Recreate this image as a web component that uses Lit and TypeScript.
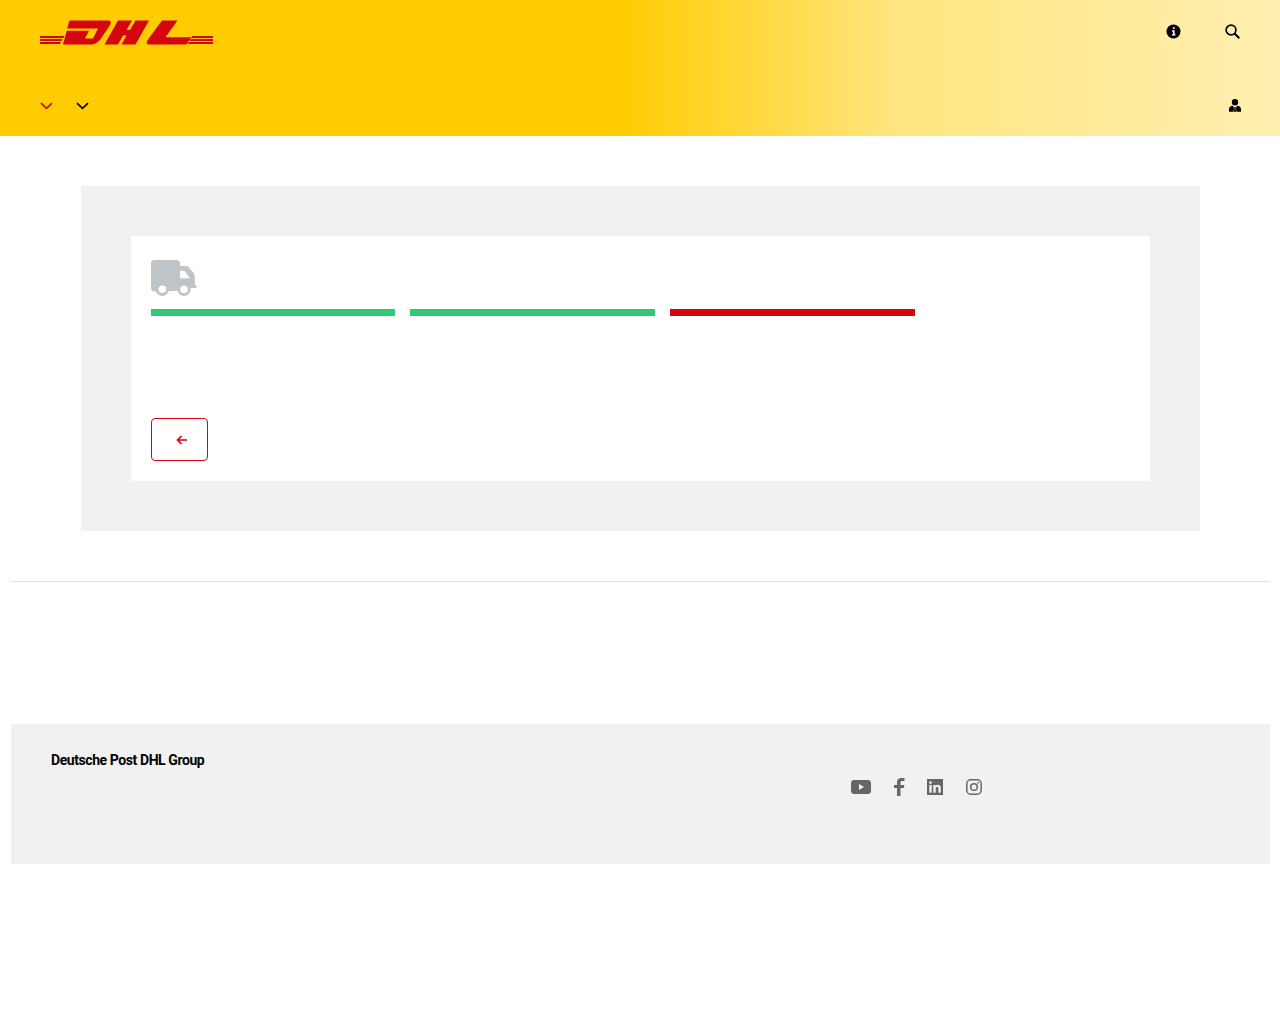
import { LitElement, html, css } from "lit";
import { customElement } from "lit/decorators.js";

const chevron = (cls: string) => html`<svg class="chev ${cls}" width="13" height="8" viewBox="0 0 13 8"><path d="M1 1.200 6.500 6.300 12 1.200" fill="none" stroke="currentColor" stroke-width="1.700"/></svg>`;

@customElement("app-root")
export class AppRoot extends LitElement {
  static styles = css`
    :host { display: block; font-family: "Roboto", "Liberation Sans", sans-serif; background: #fff; min-height: 1024px; }
    header { height: 136px; box-sizing: border-box; padding: 20px 38px 0 40px; display: flex; flex-direction: column;
      background: linear-gradient(90deg, #fc0 0, #fc0 48%, #ffe57f 70%, #fff0b2 100%); }
    .top { display: flex; justify-content: space-between; height: 25px; }
    .logo { display: block; }
    .tools { display: flex; gap: 44px; padding-top: 4px; margin-right: 2px; }
    .tools svg { display: block; }
    .nav { display: flex; justify-content: space-between; align-items: center; margin-top: 54px; }
    .chevs { display: flex; gap: 23px; padding-top: 1px; }
    .chev { display: block; }
    .red { color: #d40511; }
    .black { color: #000; }
    .page { padding: 50px 80px 50px 81px; }
    .panel { background: #f1f1f1; padding: 50px; }
    .card { background: #fff; height: 245px; box-sizing: border-box; padding: 24px 20px 20px; display: flex; flex-direction: column; }
    .truck { display: block; }
    .bars { display: flex; gap: 15px; margin-top: 13px; }
    .bar { width: 245px; height: 7px; }
    .bar.first { width: 244px; }
    .green { background: #31c974; }
    .fail { background: #d40511; }
    .back { margin-top: 102px; width: 57px; height: 43px; box-sizing: border-box; border: 1px solid #d40511; border-radius: 4px;
      background: #fff; padding: 0 0 0 4px; display: flex; align-items: center; justify-content: center; color: #d40511; }
    .back svg { display: block; }
    .rule { height: 1px; margin: 0 10px 0 11px; background: #e3e3e3; }
    footer { margin: 142px 10px 0 11px; height: 140px; box-sizing: border-box; background: #f1f1f1; padding: 28px 40px 0; display: flex; }
    .brand { font-size: 14px; font-weight: 700; line-height: 17px; letter-spacing: -0.42px; color: #000; width: 800px; flex: none; }
    .social { display: flex; align-items: center; height: 22px; margin-top: 24px; color: #666; }
    .social svg { display: block; flex: none; }
    .s1 { margin-right: 23px; } .s2 { margin-right: 22px; } .s3 { margin-right: 23px; }
  `;

  render() {
    return html`
      <header>
        <div class="top">
          <svg class="logo" width="173" height="25" viewBox="0 0 173 25" aria-label="DHL" fill="#d40511">
            <path d="M0 16h24.500l-1.200 2H0zM0 19h22.800l-1.200 2H0zM0 22h21.100l-1.200 2H0z"/>
            <path d="M152.500 16H173v2h-21.800zM150.800 19H173v2h-23.400zM149 22H173v2h-25.200z"/>
            <g transform="translate(0 .5)">
              <path d="M29.500 0H68C71 0 71.500 2.500 70 4.500L61 18C58 22 55 24 50 24H23L26.700 10.300H49L45 18H53L58 8H27.200z"/>
              <path d="M78 0H92L86.600 9.500H90L95.500 0H109L95.500 24H81.500L86.500 15H83L78 24H64.500z"/>
              <path d="M122 0H137.500L125.500 16.700H151.500L146.500 24H110C106.500 24 106 22 108 19z"/>
            </g>
          </svg>
          <div class="tools">
            <svg width="15" height="15" viewBox="0 0 15 15"><circle cx="7.500" cy="7.500" r="7" fill="#000"/><path d="M6.900 3.300h1.700v1.800H6.900zM6 6.200h2.600v4h.9v1.300H6v-1.300h.9V7.500H6z" fill="#fff"/></svg>
            <svg width="15" height="15" viewBox="0 0 15 15"><circle cx="6" cy="6" r="4.900" fill="none" stroke="#000" stroke-width="1.700"/><path d="M9.500 9.500 14.300 14.200" stroke="#000" stroke-width="2" fill="none"/></svg>
          </div>
        </div>
        <div class="nav">
          <div class="chevs">${chevron("red")}${chevron("black")}</div>
          <svg width="12" height="13" viewBox="0 0 12 13" style="margin-right:1px"><circle cx="6" cy="3.300" r="3.200" fill="#000"/><path d="M0 12.700V10c0-2 1.500-3 3.700-3.200L5 8.500 4.600 12.700zM12 12.700V10c0-2-1.500-3-3.700-3.200L7 8.500l.4 4.200zM5.400 8h1.200l.4 4.700H5z" fill="#000"/></svg>
        </div>
      </header>
      <div class="page">
        <div class="panel">
          <div class="card">
            <svg class="truck" width="46" height="36" viewBox="0 0 46 36">
              <path fill="#bfc4c7" fill-rule="evenodd" d="M3.500 0H25.500C27.500 0 29 1.500 29 3.500V6H35C36 6 36.800 6.400 37.500 7.100L43 13.500C43.600 14.200 43.800 15 43.800 16V25H44.700C45.400 25 45.800 25.600 45.800 26.300S45.300 28 44.500 28H38V31H6V31.500H4C1.500 31.500 0 30 0 28V3.500C0 1.500 1.500 0 3.500 0ZM29 10.700V18.300H39L33.300 10.700Z"/>
              <circle cx="11.300" cy="29.300" r="6.700" fill="#bfc4c7"/>
              <circle cx="33" cy="29.300" r="6.700" fill="#bfc4c7"/>
              <path fill="#bfc4c7" d="M5 31H39V32H5Z" opacity="0"/>
              <circle cx="11.300" cy="29.300" r="3.800" fill="#fff"/>
              <circle cx="33" cy="29.300" r="3.800" fill="#fff"/>
            </svg>
            <div class="bars">
              <div class="bar first green"></div>
              <div class="bar green"></div>
              <div class="bar fail"></div>
            </div>
            <button class="back" aria-label="Back">
              <svg width="12" height="10" viewBox="0 0 12 10"><path d="M11 5H2M5.500 1 1.500 5l4 4" fill="none" stroke="currentColor" stroke-width="1.700"/></svg>
            </button>
          </div>
        </div>
      </div>
      <div class="rule"></div>
      <footer>
        <div class="brand">Deutsche Post DHL Group</div>
        <div class="social">
          <svg class="s1" width="20" height="14" viewBox="0 0 20 14"><path fill-rule="evenodd" d="M3 0h14c1.700 0 3 1.300 3 3v8c0 1.700-1.300 3-3 3H3c-1.700 0-3-1.300-3-3V3c0-1.700 1.300-3 3-3zm5 4v6l5-3z" fill="currentColor"/></svg>
          <svg class="s2" width="11" height="18" viewBox="0 0 11 18"><path d="M3 18V10H0V7h3V4.500C3 1.500 4.700 0 7.300 0H10.500v3H8.300C7 3 6.500 3.600 6.500 4.700V7h3.900l-.5 3H6.500v8z" fill="currentColor"/></svg>
          <svg class="s3" width="16" height="16" viewBox="0 0 16 16"><path fill-rule="evenodd" d="M0 0h16v16H0zM2.300 6v7.700h2.400V6zM3.500 2.200a1.400 1.400 0 1 0 0 2.800 1.400 1.400 0 0 0 0-2.800zM6.300 6v7.700h2.400V9.600c0-1.100.5-1.700 1.400-1.700s1.300.6 1.300 1.700v4.100h2.400V9c0-2.100-1.100-3.200-2.900-3.200-1 0-1.800.4-2.200 1.100V6z" fill="currentColor"/></svg>
          <svg width="16" height="16" viewBox="0 0 16 16" fill="none" stroke="currentColor" stroke-width="1.500"><rect x=".8" y=".8" width="14.400" height="14.400" rx="4"/><circle cx="8" cy="8" r="3.300"/><circle cx="12.200" cy="3.800" r=".9" fill="currentColor" stroke="none"/></svg>
        </div>
      </footer>
    `;
  }
}
